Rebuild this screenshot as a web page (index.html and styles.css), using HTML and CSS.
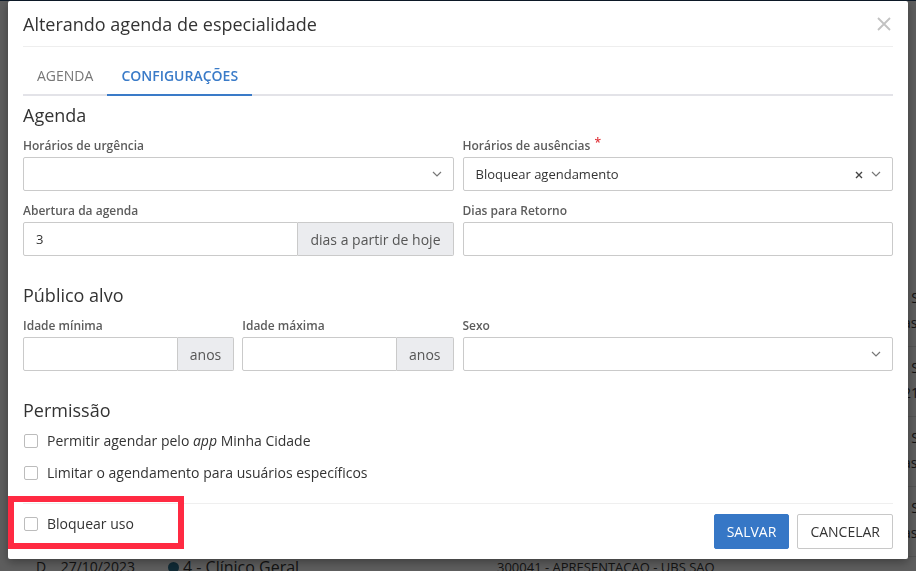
FILE: index.html
```html
<!DOCTYPE html>
<html lang="pt-BR">
<head>
<meta charset="utf-8">
<title>Alterando agenda de especialidade</title>
<link rel="stylesheet" href="styles.css">
</head>
<body>
<div class="page">
  <div class="page-top"></div>
  <div class="bg-row"><span class="c1"></span><span class="c2"></span><span class="c3"></span><span class="c4">- SEG<br>as 08:00</span></div>
  <div class="bg-row"><span class="c1"></span><span class="c2"></span><span class="c3"></span><span class="c4">- SEG<br>21:00</span></div>
  <div class="bg-row"><span class="c1"></span><span class="c2"></span><span class="c3"></span><span class="c4">- SEG<br>as 08:00</span></div>
  <div class="bg-row"><span class="c1"></span><span class="c2"></span><span class="c3"></span><span class="c4">- SEG<br>as 08:00</span></div>
  <div class="bg-row last"><span class="c1">D&nbsp;&nbsp;&nbsp;&nbsp;27/10/2023</span><span class="c2"><i class="dot"></i>4 - Clínico Geral</span><span class="c3">300041 - APRESENTAÇAO - UBS SAO</span><span class="c4"></span></div>
</div>
<div class="overlay"></div>

<div class="modal">
  <div class="modal-header">
    <h1 class="modal-title">Alterando agenda de especialidade</h1>
    <svg class="close" width="14" height="14" viewBox="0 0 14 14"><path d="M1 1L13 13M13 1L1 13" stroke="#c2c2c2" stroke-width="1.8" fill="none"/></svg>
  </div>

  <div class="tabs">
    <div class="tab">AGENDA</div>
    <div class="tab active">CONFIGURAÇÕES</div>
  </div>

  <div class="modal-body">
    <h2 class="section">Agenda</h2>
    <div class="grid2">
      <div class="field">
        <label class="lbl">Horários de urgência</label>
        <div class="select"><span class="val"></span><svg class="chev" width="10" height="6" viewBox="0 0 10 6"><path d="M1 1L5 5L9 1" stroke="#777" stroke-width="1.2" fill="none"/></svg></div>
      </div>
      <div class="field">
        <label class="lbl">Horários de ausências <span class="req">*</span></label>
        <div class="select"><span class="val">Bloquear agendamento</span><svg class="clear" width="8" height="8" viewBox="0 0 8 8"><path d="M1 1L7 7M7 1L1 7" stroke="#444" stroke-width="1.4" fill="none"/></svg><svg class="chev" width="10" height="6" viewBox="0 0 10 6"><path d="M1 1L5 5L9 1" stroke="#777" stroke-width="1.2" fill="none"/></svg></div>
      </div>
      <div class="field">
        <label class="lbl">Abertura da agenda</label>
        <div class="group"><div class="input">3</div><div class="addon">dias a partir de hoje</div></div>
      </div>
      <div class="field">
        <label class="lbl">Dias para Retorno</label>
        <div class="input"></div>
      </div>
    </div>

    <h2 class="section gap">Público alvo</h2>
    <div class="grid2">
      <div class="grid-half">
        <div class="field">
          <label class="lbl">Idade mínima</label>
          <div class="group"><div class="input"></div><div class="addon">anos</div></div>
        </div>
        <div class="field">
          <label class="lbl">Idade máxima</label>
          <div class="group"><div class="input"></div><div class="addon">anos</div></div>
        </div>
      </div>
      <div class="field">
        <label class="lbl">Sexo</label>
        <div class="select"><span class="val"></span><svg class="chev" width="10" height="6" viewBox="0 0 10 6"><path d="M1 1L5 5L9 1" stroke="#777" stroke-width="1.2" fill="none"/></svg></div>
      </div>
    </div>

    <h2 class="section gap">Permissão</h2>
    <div class="checks">
      <div class="check"><span class="box"></span><span>Permitir agendar pelo <em>app</em> Minha Cidade</span></div>
      <div class="check"><span class="box"></span><span>Limitar o agendamento para usuários específicos</span></div>
    </div>
  </div>

  <div class="modal-footer">
    <div class="check"><span class="box"></span><span>Bloquear uso</span></div>
    <div class="buttons">
      <button class="btn primary">SALVAR</button>
      <button class="btn">CANCELAR</button>
    </div>
    <div class="highlight"></div>
  </div>
</div>
</body>
</html>
```

FILE: styles.css
```css
* { box-sizing: border-box; }
html, body { margin: 0; padding: 0; }
body {
  width: 916px;
  height: 571px;
  overflow: hidden;
  font-family: "Open Sans", "Liberation Sans", sans-serif;
  color: #333;
  background: #f4f4f4;
  position: relative;
}

/* background page (dimmed) */
.page { width: 916px; }
.page-top { height: 277px; border-top: 1px solid #24466b; }
.bg-row {
  height: 70px;
  margin-left: 20px;
  border-bottom: 1px solid #d8d8d8;
  display: flex;
  font-size: 14px;
  color: #333;
  padding-top: 8px;
  white-space: nowrap;
}
.bg-row > span { flex-shrink: 0; }
.bg-row.last { border-bottom: none; padding-top: 0; line-height: 20px; }
.bg-row .c1 { width: 148px; padding-left: 16px; }
.bg-row .c2 { width: 329px; display: flex; align-items: flex-start; gap: 4px; font-size: 16px; }
.bg-row .c3 { width: 406px; font-size: 13px; }
.bg-row .c4 { width: 60px; line-height: 25px; }
.dot { display: inline-block; width: 11px; height: 11px; border-radius: 50%; background: #2c6e8a; margin-top: 5px; }

.overlay {
  position: fixed;
  inset: 0;
  background: rgba(0, 0, 0, 0.62);
}

/* modal */
.modal {
  position: fixed;
  left: 8px;
  top: 1px;
  width: 900px;
  height: 558px;
  background: #fff;
  border-radius: 2px;
  box-shadow: 0 3px 10px rgba(0,0,0,0.35);
  display: flex;
  flex-direction: column;
}
.modal-header {
  margin: 0 15px;
  height: 46px;
  border-bottom: 1px solid #eee;
  display: flex;
  align-items: center;
  justify-content: space-between;
}
.modal-title {
  margin: 0;
  font-size: 18px;
  font-weight: 400;
  color: #333;
  line-height: 24px;
}
.close { margin-right: 2px; margin-top: 1px; }

.tabs {
  margin: 0 15px;
  padding-top: 10px;
  display: flex;
  border-bottom: 2px solid #e3e3e8;
}
.tab {
  padding: 10px 14px;
  line-height: 17px;
  font-size: 14px;
  color: #777;
  margin-bottom: -2px;
  border-bottom: 2px solid transparent;
}
.tab.active {
  color: #3a7bc8;
  font-weight: 600;
  border-bottom-color: #3a7bc8;
}

.modal-body {
  padding: 7px 15px 0;
  flex: 1;
}
.section {
  margin: 0 0 11px;
  font-size: 18px;
  font-weight: 400;
  line-height: 24px;
  color: #333;
}
.section.gap { margin-top: 27px; }

.grid2 {
  display: grid;
  grid-template-columns: 1fr 1fr;
  column-gap: 9px;
  row-gap: 12px;
}
.grid-half {
  display: grid;
  grid-template-columns: 1fr 1fr;
  column-gap: 8px;
}
.field { display: flex; flex-direction: column; }
.lbl {
  font-size: 12px;
  line-height: 16px;
  font-weight: 600;
  color: #5c5c5c;
  margin-bottom: 3px;
}
.req { color: #e0343a; position: relative; top: -3px; margin-left: 1px; }

.select, .input {
  height: 34px;
  border: 1px solid #cacaca;
  border-radius: 2px;
  font-size: 13px;
  color: #333;
  display: flex;
  align-items: center;
  padding: 0 12px;
}
.select .val { flex: 1; }
.select .clear { margin-right: 8px; margin-top: 1px; }
.select .chev { margin-right: -1px; }

.group { display: flex; }
.group .input { flex: 1; border-radius: 2px 0 0 2px; }
.addon {
  height: 34px;
  border: 1px solid #cacaca;
  border-left: none;
  border-radius: 0 2px 2px 0;
  background: #ebecef;
  font-size: 14px;
  color: #555;
  display: flex;
  align-items: center;
  padding: 0 12px;
}

.checks { display: flex; flex-direction: column; gap: 12px; margin-top: -2px; }
.check {
  display: flex;
  align-items: center;
  font-size: 14px;
  line-height: 20px;
  color: #333;
}
.box {
  width: 14px;
  height: 14px;
  border: 1.5px solid #bcbcbc;
  border-radius: 2px;
  margin-left: 1px;
  margin-right: 9px;
}

.modal-footer {
  position: relative;
  margin: 0 15px;
  height: 56px;
  border-top: 1px solid #efefef;
  display: flex;
  align-items: flex-start;
  justify-content: space-between;
  padding-top: 10px;
}
.buttons { display: flex; gap: 8px; }
.btn {
  height: 35px;
  font-family: inherit;
  font-size: 14px;
  border: 1px solid #c8c8c8;
  border-radius: 2px;
  background: #fff;
  color: #333;
  padding: 0 12px;
}
.btn.primary {
  background: #3677c6;
  border-color: #3677c6;
  color: #fff;
}
.highlight {
  position: absolute;
  left: -15px;
  top: -8px;
  width: 176px;
  height: 53px;
  border: 6px solid #ff2a42;
}
```
